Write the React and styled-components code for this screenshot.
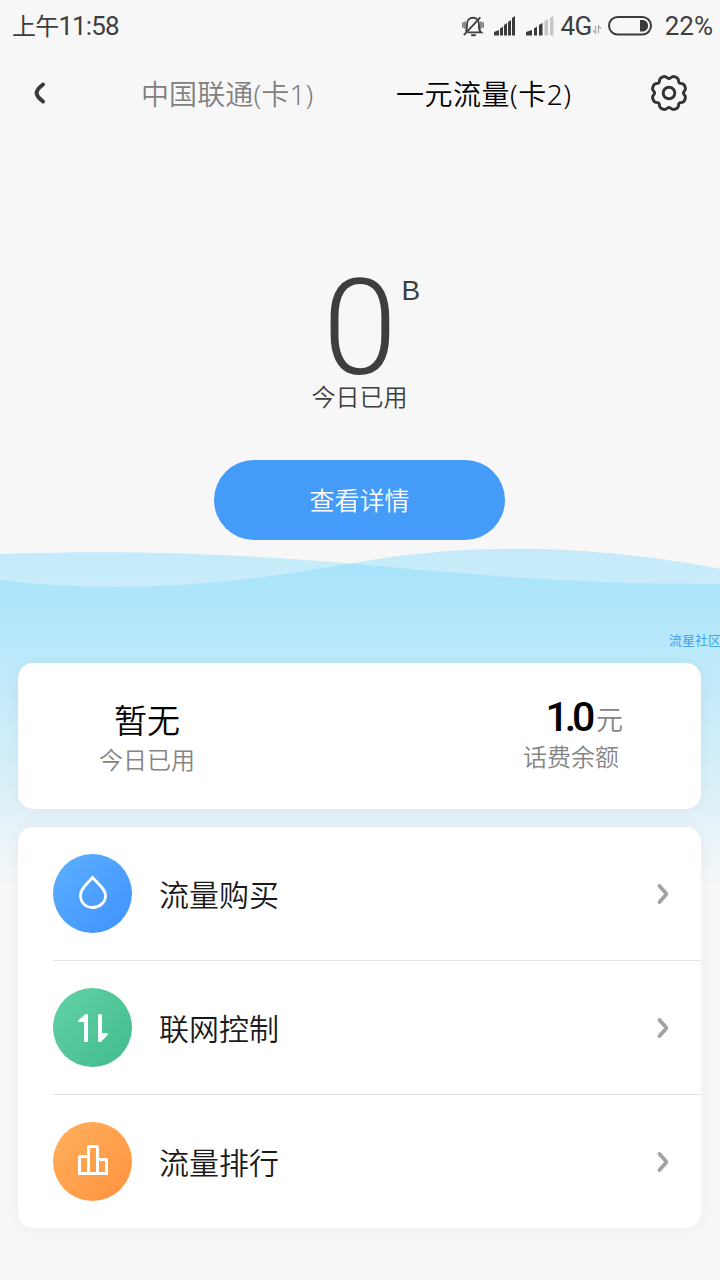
import React from 'react';
import styled, { createGlobalStyle } from 'styled-components';

const GlobalStyle = createGlobalStyle`
  * { box-sizing: border-box; }
  body {
    margin: 0;
    background: #f7f7f7;
    font-family: Roboto, "Noto Sans CJK SC", sans-serif;
  }
`;

const Screen = styled.div`
  width: 720px;
  height: 1280px;
  overflow: hidden;
  display: flex;
  flex-direction: column;
  background: #f7f7f7;
`;

const Text = styled.span`
  display: block;
  white-space: nowrap;
  font-family: Roboto, "Noto Sans CJK SC", sans-serif;
  font-size: ${(p) => p.$size}px;
  line-height: ${(p) => p.$line || p.$size}px;
  font-weight: ${(p) => p.$weight || 350};
  color: ${(p) => p.$color || '#3e3e3e'};
  letter-spacing: ${(p) => p.$spacing || 0}px;
  padding-top: ${(p) => p.$drop || 0}px;
`;

const StatusBar = styled.header`
  height: 50px;
  padding: 2px 7px 0 12px;
  display: flex;
  align-items: center;
  justify-content: space-between;
`;

const Clock = styled.time`
  display: flex;
`;

const StatusIcons = styled.div`
  display: flex;
  align-items: center;
`;

const StatusGlyph = styled.svg`
  display: block;
  margin-right: ${(p) => p.$gap || 0}px;
`;

const TitleBar = styled.nav`
  height: 86px;
  padding: 0 32px 0 33px;
  display: grid;
  grid-template-columns: 68px 254px 1fr 38px;
  align-items: center;
`;

const IconButton = styled.button`
  padding: 0;
  border: 0;
  background: none;
  display: flex;
`;

const TabLabel = styled(Text)`
  padding-left: ${(p) => p.$indent || 0}px;
  font-family: "Noto Sans", "Noto Sans CJK SC", sans-serif;
`;

const Hero = styled.section`
  height: 412px;
  padding: 124px 1px 0 0;
  display: flex;
  flex-direction: column;
  align-items: center;
`;

const Usage = styled.div`
  height: 119px;
  display: grid;
  grid-template-columns: 64px 82px 64px;
  justify-content: center;
`;

const UsageNumber = styled(Text)`
  grid-column: 2;
  padding: 19px 0 0 1px;
  text-align: center;
`;

const UsageUnit = styled(Text)`
  padding: 17px 0 0 1px;
  font-family: "Liberation Sans", sans-serif;
`;

const DetailButton = styled.button`
  width: 291px;
  height: 80px;
  margin-top: 45px;
  border: 0;
  border-radius: 40px;
  background: #459bf8;
  display: flex;
  align-items: center;
  justify-content: center;
`;

const Lower = styled.main`
  position: relative;
  isolation: isolate;
  flex: 1;
  padding: 80px 19px 0 18px;
  display: flex;
  flex-direction: column;
`;

const WaveArt = styled.svg`
  position: absolute;
  z-index: -1;
  top: 0;
  left: 0;
`;

const Community = styled(Text)`
  align-self: flex-end;
  margin: 5px -20px 14px 0;
`;

const Card = styled.section`
  border-radius: 15px;
  background: #fff;
  box-shadow: 0 2px 16px rgba(0, 0, 0, 0.045);
`;

const SummaryCard = styled(Card)`
  height: 146px;
  margin-bottom: 18px;
  padding: 0 82px 0 81px;
  display: flex;
  justify-content: space-between;
`;

const Stat = styled.div`
  padding-top: ${(p) => p.$top}px;
  display: flex;
  flex-direction: column;
  align-items: ${(p) => p.$align || 'center'};
`;

const Amount = styled.div`
  display: flex;
  align-items: flex-start;
  gap: 5px;
  margin-right: -4px;
`;

const MenuCard = styled(Card)`
  height: 401px;
  padding-left: 35px;
`;

const MenuRow = styled.div`
  height: 134px;
  padding-right: 31px;
  display: flex;
  align-items: center;
  gap: 27px;
  border-bottom: 1px solid #e3e3e3;
  &:last-child { border-bottom: 0; height: 133px; }
`;

const RowLabel = styled(Text)`
  flex: 1;
`;

const Badge = styled.span`
  width: 79px;
  height: 79px;
  border-radius: 50%;
  background: linear-gradient(135deg, ${(p) => p.$from}, ${(p) => p.$to});
`;

const gearPath = Array.from({ length: 120 }, (_, i) => {
  const a = (i / 120) * Math.PI * 2;
  const r = 17.2 - 2.8 * Math.pow((1 + Math.cos(8 * a)) / 2, 2);
  return `${i ? 'L' : 'M'}${(19 + r * Math.cos(a)).toFixed(2)} ${(19 + r * Math.sin(a)).toFixed(2)}`;
}).join('') + 'Z';

const MutedBell = () => (
  <StatusGlyph width="22" height="22" viewBox="0 0 24 24" $gap={10} fill="none" stroke="#3e3e3e" strokeWidth="2">
    <path d="M6 19H21C18.500 16.800 18.500 15 18.500 10C18.500 5.800 16 3 12 3S5.500 5.800 5.500 10C5.500 15 5.500 16 4 18" />
    <path d="M2 22L20 2.500" />
    <path d="M10 22H15" strokeWidth="2.200" />
    <path d="M1 8V14M3.300 7V15M20.700 7V15M23 8V14" strokeWidth="1.300" />
  </StatusGlyph>
);

const Signal = ({ width, bars, gap }) => (
  <StatusGlyph width={width} height="20" viewBox={`0 0 ${width} 20`} $gap={gap}>
    {bars.map(([x, w, top, color]) => (
      <path key={x} d={`M${x} 19.500V${top + 2}L${x + w} ${top}V19.500Z`} fill={color} />
    ))}
  </StatusGlyph>
);

const D = '#3a3a3a';
const L = '#c7c7c7';

const Chevron = () => (
  <svg width="14" height="24" viewBox="0 0 14 24" fill="none" stroke="#a3a3a3" strokeWidth="3.800" strokeLinecap="round" strokeLinejoin="round">
    <path d="M3.500 4L10 11.200Q10.700 12 10 12.800L3.500 20" />
  </svg>
);

const icons = {
  drop: <path d="M39.500 23.500C34 30 27.500 34.500 27.500 41.500C27.500 48.500 32.500 53.500 39.500 53.500S52.500 48.500 52.500 41.500C52.500 34.500 45 30 39.500 23.500Z" fill="none" stroke="#fff" strokeWidth="2.800" />,
  arrows: (
    <g fill="#fff">
      <path d="M32.500 26H34Q35 26 35 27V53Q35 54 33 54Q31 54 31 53V34H26Q25 34 25 32.500Z" />
      <path d="M45 27Q45 26 47 26Q49 26 49 27V45H54Q55 45 55 46.500L48 54H46Q45 54 45 53Z" />
    </g>
  ),
  bars: (
    <g fill="none" stroke="#fff" strokeWidth="3">
      <path d="M35.500 34.500H27Q26.500 34.500 26.500 35V51.500H53.500V38Q53.500 37.500 53 37.500H44.500" />
      <path d="M35.500 51.500V25Q35.500 24.500 36 24.500H44Q44.500 24.500 44.500 25V51.500" />
    </g>
  ),
};

const menu = [
  { label: '流量购买', icon: 'drop', from: '#5cb0ff', to: '#3f92fd' },
  { label: '联网控制', icon: 'arrows', from: '#63d2a7', to: '#41bb8b' },
  { label: '流量排行', icon: 'bars', from: '#ffb05c', to: '#ff923f' },
];

export default function App() {
  return (
    <>
      <GlobalStyle />
      <Screen>
        <StatusBar>
          <Clock>
            <Text $size={24} $line={36} $spacing={-0.8} $weight={400} $drop={1}>上午</Text>
            <Text $size={26} $line={36} $spacing={-0.9} $weight={400}>11:58</Text>
          </Clock>
          <StatusIcons>
            <MutedBell />
            <Signal width={22} gap={10} bars={[[0, 5, 14, D], [6, 3, 10.5, D], [10, 3, 7, D], [14, 3, 4, D], [18, 3, 0, D]]} />
            <Signal width={28} gap={6} bars={[[0, 6, 14, D], [8, 3, 10.5, D], [13, 3.5, 7, D], [18.5, 3.5, 3, L], [24, 3.5, 0, L]]} />
            <Text $size={26} $line={36} $weight={400} $spacing={-0.5}>4G</Text>
            <StatusGlyph width="10" height="20" viewBox="0 0 10 20" $gap={6} fill="none" stroke="#aaa" strokeWidth="1.300">
              <path d="M3.500 10V17L1 14.500M6.500 17V10L9 12.500" />
            </StatusGlyph>
            <StatusGlyph width="44" height="20" viewBox="0 0 44 20" $gap={13}>
              <rect x="1" y="1" width="42" height="17.500" rx="8.750" fill="none" stroke={D} strokeWidth="2" />
              <path d="M32 4H34C38 4 40 6.500 40 9.750S38 15.500 34 15.500H32Z" fill={D} />
            </StatusGlyph>
            <Text $size={26} $line={36} $weight={400}>22%</Text>
          </StatusIcons>
        </StatusBar>

        <TitleBar>
          <IconButton aria-label="返回">
            <svg width="14" height="24" viewBox="0 0 14 24" fill="none" stroke="#3a3a3a" strokeWidth="4" strokeLinecap="round">
              <path d="M10 3.500C1.500 10 1.500 14 10 20.500" />
            </svg>
          </IconButton>
          <TabLabel $size={28} $line={40} $color="#808080" $indent={40} $drop={1} $spacing={0.1}>中国联通(卡1)</TabLabel>
          <TabLabel $size={28} $line={40} $color="#000" $indent={41} $drop={1} $spacing={0.5}>一元流量(卡2)</TabLabel>
          <IconButton aria-label="设置">
            <svg width="38" height="38" viewBox="0 0 38 38" fill="none" stroke="#333" strokeWidth="2.900" strokeLinejoin="round">
              <path d={gearPath} />
              <circle cx="19" cy="19" r="5.800" />
            </svg>
          </IconButton>
        </TitleBar>

        <Hero>
          <Usage>
            <UsageNumber $size={134} $line={100}>0</UsageNumber>
            <UsageUnit $size={28} $line={28}>B</UsageUnit>
          </Usage>
          <Text $size={24} $line={34} $drop={2}>今日已用</Text>
          <DetailButton>
            <Text $size={25} $line={36} $color="#fff" $drop={3}>查看详情</Text>
          </DetailButton>
        </Hero>

        <Lower>
          <WaveArt width="720" height="340" viewBox="0 0 720 340">
            <defs>
              <linearGradient id="water" gradientUnits="userSpaceOnUse" x1="0" y1="0" x2="0" y2="338">
                <stop offset="0" stopColor="#80dafd" stopOpacity="0.43" />
                <stop offset="1" stopColor="#80dafd" stopOpacity="0" />
              </linearGradient>
            </defs>
            <path d="M0 6C150 1 260 8 351 15.500C460 25 560 36 720 36V340H0Z" fill="url(#water)" />
            <path d="M0 32C120 46 220 38 351 15.500C440 -1 560 -9 720 20.500V340H0Z" fill="url(#water)" />
          </WaveArt>
          <Community $size={13} $line={16} $color="#2fa0f8">流星社区</Community>
          <SummaryCard>
            <Stat $top={38}>
              <Text $size={33} $line={42} $color="#000">暂无</Text>
              <Text $size={24} $line={36} $color="#858585">今日已用</Text>
            </Stat>
            <Stat $top={33} $align="flex-end">
              <Amount>
                <Text $size={41} $line={42} $color="#000" $weight={500} $spacing={-4.2}>1.0</Text>
                <Text $size={27} $line={36} $color="#858585" $drop={7}>元</Text>
              </Amount>
              <Text $size={24} $line={36} $color="#858585" $drop={1}>话费余额</Text>
            </Stat>
          </SummaryCard>
          <MenuCard>
            {menu.map((m) => (
              <MenuRow key={m.label}>
                <Badge $from={m.from} $to={m.to}>
                  <svg width="79" height="79" viewBox="0 0 79 79">{icons[m.icon]}</svg>
                </Badge>
                <RowLabel $size={30} $line={44} $color="#1a1a1a" $drop={5}>{m.label}</RowLabel>
                <Chevron />
              </MenuRow>
            ))}
          </MenuCard>
        </Lower>
      </Screen>
    </>
  );
}
